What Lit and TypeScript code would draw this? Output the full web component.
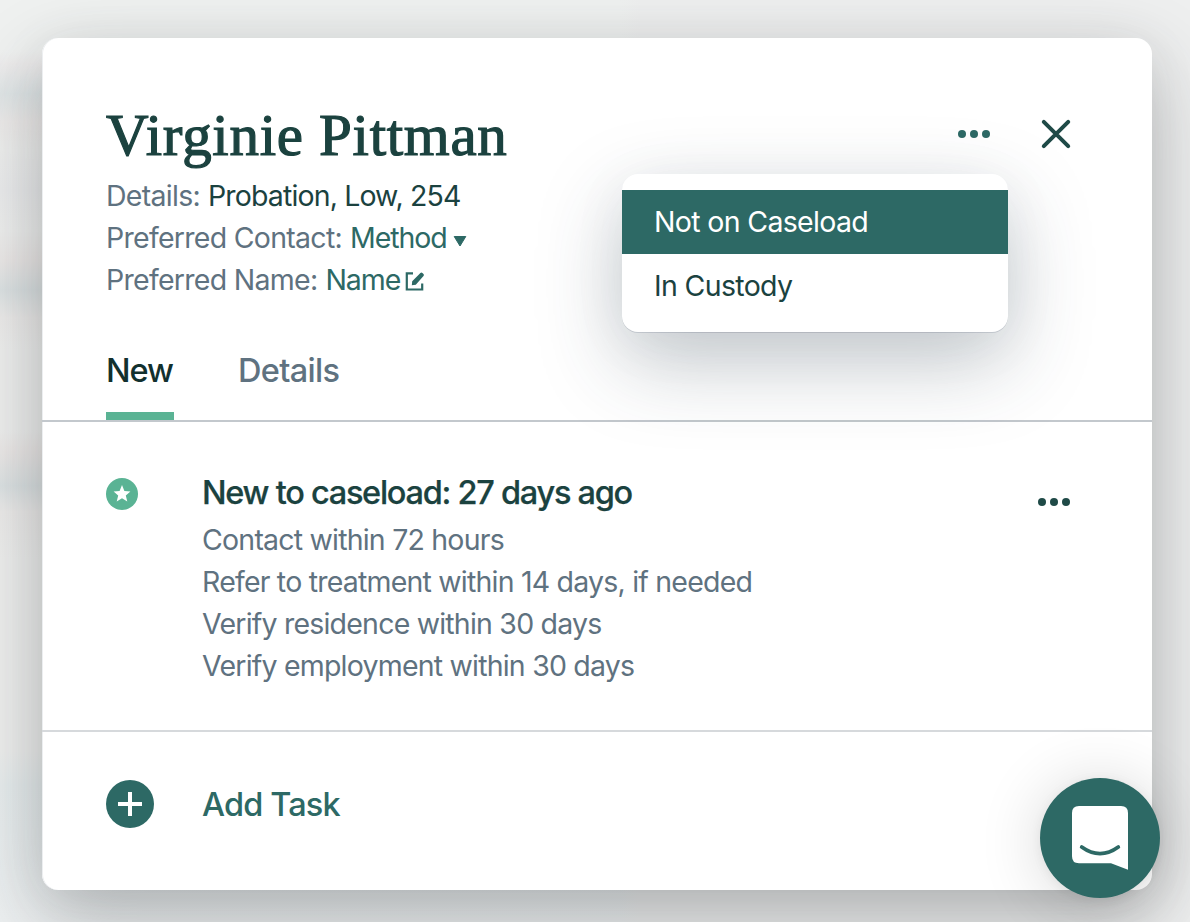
import { LitElement, html, css, svg } from "lit";
import { customElement } from "lit/decorators.js";

const dots = html`<svg width="32" height="8" viewBox="0 0 32 8" fill="currentColor">
  ${[4, 16, 28].map((x) => svg`<circle cx=${x} cy="4" r="4" />`)}
</svg>`;

@customElement("app-root")
export class AppRoot extends LitElement {
  static styles = css`
    :host {
      display: block;
      box-sizing: border-box;
      width: 1190px;
      height: 922px;
      padding: 38px 38px 32px 42px;
      overflow: hidden;
      position: relative;
      background-color: #eeefef;
      background-image:
        linear-gradient(90deg, transparent 620px, #eeefef 640px),
        linear-gradient(180deg, #eff1f0 0, #eff1f0 50px, #edecec 64px, #e0e6e7 94px, #edebea 122px,
          #eeefee 150px, #ebeced 190px, #eeefee 230px, #ebe8e7 260px, #dce2e3 290px, #ecebea 318px,
          #eeefee 350px, #eeefee 430px, #ebe8e7 452px, #dce2e3 486px, #ecebea 512px,
          #eeefee 560px, #eeefee 750px, #e7edee 785px, #edf0f1 922px);
      font-family: Inter, "Liberation Sans", sans-serif;
      font-size: 28.5px;
      letter-spacing: -0.79px;
      line-height: 42px;
      color: #5f7280;
      white-space: nowrap;
    }
    svg { display: block; flex: none; }
    .card {
      box-sizing: border-box;
      width: 1110px;
      height: 852px;
      border-radius: 16px;
      background: #fff;
      position: relative;
      display: flex;
      flex-direction: column;
      box-shadow: 0 30px 80px rgba(48, 50, 54, 0.3), 0 6px 50px rgba(50, 50, 52, 0.07), inset 1px 0 0 #eceef0;
    }
    .top {
      height: 382px;
      box-sizing: content-box;
      border-bottom: 2px solid #c3c8cd;
      padding: 0 64px;
      display: flex;
      justify-content: space-between;
    }
    .who { padding-top: 64px; display: flex; flex-direction: column; }
    h1 {
      margin: 0 0 7px;
      font: 400 59px/66px "Liberation Serif", serif;
      letter-spacing: 0.7px;
      color: #1b423f;
      -webkit-text-stroke: 1.2px #1b423f;
    }
    .row { display: flex; height: 42px; align-items: center; }
    .label { letter-spacing: -0.72px; }
    .value { color: #1b423f; margin-left: 8px; letter-spacing: -0.86px; }
    .link { color: #2d6965; display: flex; align-items: center; margin-left: 8px; letter-spacing: -1.05px; }
    .caret { margin: 6px 0 0 6px; }
    .edit { margin: 3px 0 0 5px; }
    .tabs { display: flex; gap: 64px; margin-top: auto; font-size: 32.5px; font-weight: 500; letter-spacing: -0.7px; }
    .tab { height: 70px; line-height: 42px; box-sizing: border-box; }
    .active { width: 68px; color: #12302e; border-bottom: 8px solid #5ab394; letter-spacing: -1.1px; }
    .actions { display: flex; align-items: center; gap: 50px; height: 28px; padding: 82px 16px 0 0; color: #2d6965; }
    .close { color: #1f4a47; }
    .task {
      height: 308px;
      box-sizing: content-box;
      border-bottom: 2px solid #d6d9dc;
      padding: 0 64px;
      display: flex;
    }
    .star { margin: 56px 64px 0 0; }
    .body { flex: 1; padding-top: 48px; }
    h2 {
      margin: 0 0 4px;
      font: 500 32.5px/45px Inter, sans-serif;
      letter-spacing: -1.27px;
      color: #1b423f;
      -webkit-text-stroke: 0.25px #1b423f;
    }
    .more { margin: 76px 18px 0 0; color: #1f4a47; }
    .add {
      flex: 1;
      display: flex;
      align-items: center;
      padding: 0 64px 14px;
      gap: 48px;
      color: #2d6965;
      font-size: 32.5px;
      font-weight: 500;
      letter-spacing: -0.85px;
    }
    .add span { padding-top: 2px; }
    .menu {
      position: absolute;
      left: 580px;
      top: 136px;
      width: 386px;
      height: 158px;
      box-sizing: border-box;
      padding-top: 16px;
      border-radius: 16px;
      background: #fff;
      color: #1b423f;
      box-shadow: 0 30px 84px rgba(43, 62, 74, 0.28), 0 10px 60px rgba(43, 62, 74, 0.05), 0 1px 0 #dfe1e6;
    }
    .item { height: 64px; line-height: 64px; padding: 0 32px; letter-spacing: -0.66px; }
    .on { background: #2d6965; color: #fff; }
    .chat {
      position: absolute;
      left: 1040px;
      top: 778px;
      width: 120px;
      height: 120px;
      border-radius: 50%;
      background: #2d6965;
      box-shadow: 0 2px 12px rgba(0, 0, 0, 0.06), 0 4px 64px rgba(0, 0, 0, 0.16);
    }
  `;

  render() {
    return html`
      <div class="card">
        <header class="top">
          <div class="who">
            <h1>Virginie Pittman</h1>
            <div class="row"><span class="label">Details:</span><span class="value">Probation, Low, 254</span></div>
            <div class="row"><span class="label">Preferred Contact:</span><span class="link">Method
              <svg class="caret" width="14" height="12" viewBox="0 0 14 12"><path d="M1.2 1.5h11.6L7 11z" fill="currentColor" stroke="currentColor" stroke-linejoin="round" /></svg></span></div>
            <div class="row"><span class="label">Preferred Name:</span><span class="link">Name
              <svg class="edit" width="20" height="20" viewBox="0 0 20 20"><path d="M8 1.3H1.8V17.5h15.4v-6" fill="none" stroke="currentColor" stroke-width="2.2" /><path d="M6.8 13.2l.4-4L15.4 1q1-.9 2 0l1.1 1.1q.9 1 0 2l-7.7 8.7z" fill="currentColor" /></svg></span></div>
            <nav class="tabs"><div class="tab active">New</div><div class="tab">Details</div></nav>
          </div>
          <div class="actions">${dots}
            <svg class="close" width="32" height="32" viewBox="0 0 32 32"><path d="M3.8 3.8l24.4 24.4m0-24.4l-24.4 24.4" stroke="currentColor" stroke-width="4" stroke-linecap="round" /></svg>
          </div>
        </header>
        <section class="task">
          <svg class="star" width="32" height="32" viewBox="0 0 32 32"><circle cx="16" cy="16" r="16" fill="#5ab394" /><path fill="#fff" d="M16 7l2.4 5.9 6 .5-4.6 4 1.5 6L16 20.2l-5.3 3.2 1.5-6-4.6-4 6-.5z" /></svg>
          <div class="body">
            <h2>New to caseload: 27 days ago</h2>
            <div>Contact within 72 hours</div>
            <div>Refer to treatment within 14 days, if needed</div>
            <div>Verify residence within 30 days</div>
            <div>Verify employment within 30 days</div>
          </div>
          <div class="more">${dots}</div>
        </section>
        <footer class="add">
          <svg width="48" height="48" viewBox="0 0 48 48"><circle cx="24" cy="24" r="24" fill="#2d6965" /><path d="M12 24h24M24 12v24" stroke="#fff" stroke-width="4" /></svg>
          <span>Add Task</span>
        </footer>
        <div class="menu">
          <div class="item on">Not on Caseload</div>
          <div class="item">In Custody</div>
        </div>
      </div>
      <div class="chat">
        <svg width="120" height="120" viewBox="0 0 120 120"><path d="M39 28h42q7 0 7 7v56.8L71 85.3H39q-7 0-7-7V35q0-7 7-7z" fill="#fff" /><path d="M41.7 69q18.3 13.2 36.6 0" fill="none" stroke="#2d6965" stroke-width="3.8" stroke-linecap="round" /></svg>
      </div>`;
  }
}
